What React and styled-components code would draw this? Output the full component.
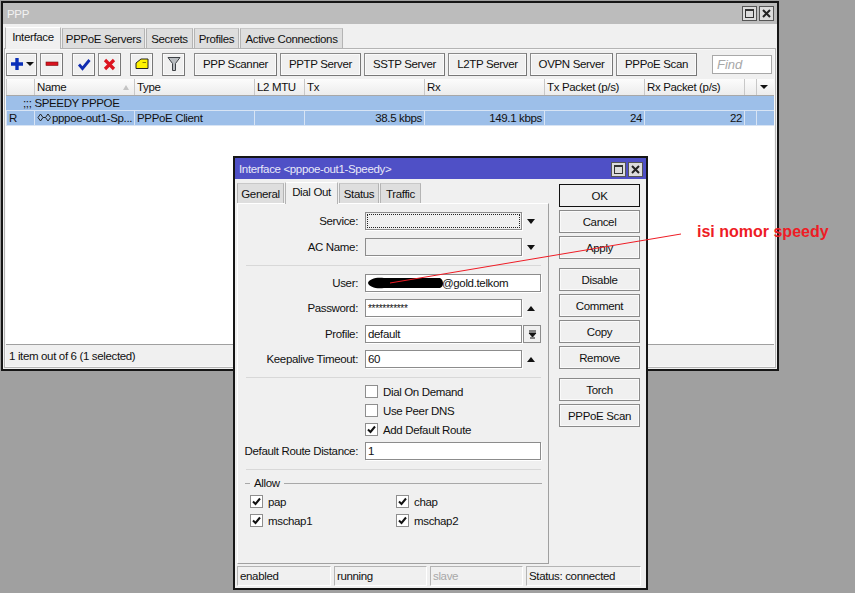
import styled, { createGlobalStyle } from 'styled-components';

const Global = createGlobalStyle`
  html, body { margin: 0; padding: 0; background: #a0a0a0; }
  * { box-sizing: border-box; }
  #root { font-family: "Liberation Sans", Arial, sans-serif; font-size: 11.5px; letter-spacing: -0.35px; color: #111; }
`;

const Desktop = styled.div`
  position: relative;
  width: 855px;
  height: 593px;
  overflow: hidden;
  background: #a0a0a0;
`;

const Window = styled.div`
  position: absolute;
  left: ${(p) => p.$x}px;
  top: ${(p) => p.$y}px;
  width: ${(p) => p.$w}px;
  height: ${(p) => p.$h}px;
  display: flex;
  flex-direction: column;
  background: #f0f0f0;
  border: 2px solid #161616;
`;

const TitleBar = styled.div`
  flex: none;
  height: 21px;
  display: flex;
  align-items: center;
  justify-content: space-between;
  padding: ${(p) => (p.$active ? '1px 3px 0 4px' : '0 3px 0 4px')};
  color: ${(p) => (p.$active ? '#e8e8f8' : '#f2f2f2')};
  background: ${(p) => (p.$active ? '#4f50c6' : '#bcbcbc')};
`;

const TitleButtons = styled.div`
  display: flex;
  gap: 2px;
`;

const TitleButton = styled.div`
  width: 15px;
  height: 15px;
  display: flex;
  align-items: center;
  justify-content: center;
  background: #dcdcdc;
  border: 1px solid #555;
`;

const TabStrip = styled.div`
  flex: none;
  height: ${(p) => p.$h}px;
  display: flex;
  align-items: flex-end;
  padding-left: ${(p) => p.$pad}px;
  gap: 1px;
`;

const Tab = styled.div`
  height: ${(p) => (p.$active ? 22 : 20)}px;
  width: ${(p) => p.$w}px;
  display: flex;
  align-items: center;
  justify-content: center;
  padding-bottom: ${(p) => (p.$active ? 3 : 0)}px;
  white-space: nowrap;
  background: ${(p) => (p.$active ? '#f0f0f0' : '#dedede')};
  border: 1px solid #b4b4b4;
  border-bottom: none;
  border-top-color: ${(p) => (p.$active ? '#fff' : '#c8c8c8')};
  margin-bottom: ${(p) => (p.$active ? -1 : 0)}px;
  position: relative;
`;

const MainBody = styled.div`
  flex: 1;
  margin: 0 1px 1px 1px;
  border: 1px solid #b4b4b4;
  box-shadow: inset 0 0 0 1px #f8f8f8;
  display: flex;
  flex-direction: column;
  min-height: 0;
  padding: 0 1px;
`;

const Toolbar = styled.div`
  flex: none;
  height: 30px;
  display: flex;
  align-items: center;
  padding: 3px 1px 3px 0;
`;

const ToolButton = styled.button`
  height: 23px;
  width: ${(p) => p.$w}px;
  margin-left: ${(p) => p.$gap}px;
  padding: 0;
  display: flex;
  align-items: center;
  justify-content: center;
  gap: 1px;
  font: inherit;
  letter-spacing: inherit;
  color: #111;
  background: #f0f0f0;
  border: 1px solid #8a8a8a;
  border-right-color: #777;
  border-bottom-color: #777;
  box-shadow: inset 0 0 0 1px #fafafa;
`;

const FindBox = styled.div`
  width: 60px;
  height: 19px;
  margin-left: 15px;
  padding: 1px 4px;
  font-size: 13px;
  letter-spacing: 0;
  font-style: italic;
  color: #a8a8a8;
  background: #fff;
  border: 1px solid #a8a8a8;
`;

const TableWrap = styled.div`
  flex: 1;
  min-height: 0;
  display: flex;
  flex-direction: column;
  background: #fff;
  border-bottom: 1px solid #a0a0a0;
`;

const columns = '28px 100px 120px 50px 120px 120px 100px 100px 12px 17px';

const HeadRow = styled.div`
  flex: none;
  display: grid;
  grid-template-columns: ${columns};
  height: 17px;
  background: linear-gradient(#fcfcfc, #ececec);
  border-bottom: 1px solid #a8a8a8;
`;

const HeadCell = styled.div`
  position: relative;
  display: flex;
  align-items: center;
  padding-left: 2px;
  border-left: 1px solid #c8c8c8;
  white-space: nowrap;
`;

const SortMark = styled.span`
  position: absolute;
  right: 5px;
  top: 6px;
  width: 0;
  height: 0;
  border-left: 3px solid transparent;
  border-right: 3px solid transparent;
  border-bottom: 5px solid #c4c4c4;
`;

const MenuArrow = styled.span`
  width: 0;
  height: 0;
  margin-left: 1px;
  border-left: 4px solid transparent;
  border-right: 4px solid transparent;
  border-top: 4px solid #111;
`;

const GroupRow = styled.div`
  flex: none;
  height: 15px;
  padding-left: 17px;
  line-height: 14px;
  background: #9dbfe9;
  border-bottom: 1px solid #d8e4f4;
`;

const DataRow = styled.div`
  flex: none;
  display: grid;
  grid-template-columns: ${columns};
  height: 15px;
  background: #9dbfe9;
  border-bottom: 1px solid #d8e4f4;
`;

const DataCell = styled.div`
  display: flex;
  align-items: center;
  justify-content: ${(p) => (p.$right ? 'flex-end' : 'flex-start')};
  padding: 0 2px 1px 2px;
  border-left: 1px solid #d8e4f4;
  white-space: nowrap;
  overflow: hidden;
`;

const LinkIcon = styled.svg`
  flex: none;
`;

const StatusLine = styled.div`
  flex: none;
  height: 22px;
  display: flex;
  align-items: center;
  padding-left: 3px;
`;

const DialogBody = styled.div`
  flex: 1;
  min-height: 0;
  display: flex;
  padding: 0 0 0 2px;
`;

const DialogLeft = styled.div`
  width: 315px;
  display: flex;
  flex-direction: column;
`;

const FormPanel = styled.div`
  flex: 1;
  width: 312px;
  padding: 8px 0 0 0;
  border-top: 1px solid #fff;
  border-right: 1px solid #a0a0a0;
  border-bottom: 1px solid #a0a0a0;
  border-left: 1px solid #fff;
`;

const Row = styled.div`
  display: grid;
  grid-template-columns: 120px 7px 157px 19px;
  align-items: center;
  height: 18px;
  margin-top: ${(p) => p.$top || 0}px;
`;

const Label = styled.div`
  text-align: right;
  white-space: nowrap;
`;

const Input = styled.div`
  grid-column: ${(p) => (p.$wide ? '3 / 5' : '3')};
  height: 18px;
  padding: 0 2px;
  line-height: 16px;
  white-space: nowrap;
  background: ${(p) => (p.$off ? '#f0f0f0' : '#fff')};
  border: 1px solid #8c8c8c;
  box-shadow: 1px 1px 0 #fff;
`;

const FocusDots = styled.div`
  margin: 1px -1px;
  height: 14px;
  border: 1px dotted #222;
`;

const UserText = styled.span`
  margin-left: 74px;
`;

const Stars = styled.span`
  font-size: 10px;
  letter-spacing: -0.3px;
`;

const SideArrow = styled.div`
  justify-self: start;
  width: 0;
  height: 0;
  margin-left: 5px;
  border-left: 4.5px solid transparent;
  border-right: 4.5px solid transparent;
  ${(p) => (p.$up ? 'border-bottom: 5px solid #111;' : 'border-top: 5px solid #111;')}
`;

const MiniButton = styled.div`
  justify-self: end;
  width: 18px;
  height: 18px;
  display: flex;
  align-items: center;
  justify-content: center;
  background: #f0f0f0;
  border: 1px solid #8c8c8c;
`;

const Divider = styled.div`
  height: 1px;
  margin: ${(p) => p.$top}px 8px 0 8px;
  width: 295px;
  background: #d8d8d8;
`;

const CheckRow = styled.label`
  display: flex;
  align-items: center;
  gap: 5px;
  height: 13px;
  margin: ${(p) => p.$top}px 0 0 ${(p) => p.$left || 0}px;
  white-space: nowrap;
`;

const Box = styled.span`
  flex: none;
  width: 13px;
  height: 13px;
  display: flex;
  align-items: center;
  justify-content: center;
  background: #fff;
  border: 1px solid #8e8e8e;
`;

const AllowHead = styled.div`
  display: flex;
  align-items: center;
  gap: 4px;
  height: 14px;
  margin: 6px 0 0 7px;
  width: 297px;
  &::before {
    content: '';
    width: 5px;
    height: 1px;
    background: #a8a8a8;
  }
  &::after {
    content: '';
    flex: 1;
    height: 1px;
    background: #a8a8a8;
  }
`;

const AllowGrid = styled.div`
  display: grid;
  grid-template-columns: 146px 146px;
  row-gap: 6px;
  margin: 5px 0 0 12px;
`;

const DialogRight = styled.div`
  flex: 1;
  display: flex;
  flex-direction: column;
  padding: 5px 0 0 7px;
`;

const SideButton = styled.button`
  flex: none;
  width: 81px;
  height: 23px;
  margin-top: ${(p) => p.$top || 0}px;
  padding: 0;
  font: inherit;
  letter-spacing: inherit;
  color: #111;
  background: #f0f0f0;
  border: ${(p) => (p.$primary ? '1px solid #111' : '1px solid #8a8a8a')};
  box-shadow: ${(p) => (p.$primary ? 'none' : 'inset 0 0 0 1px #fafafa')};
`;

const StatusBar = styled.div`
  flex: none;
  height: 24px;
  display: grid;
  grid-template-columns: 94px 93px 93px 115px;
  column-gap: 3px;
  align-items: center;
  margin: 0 2px;
`;

const StatusCell = styled.div`
  height: 20px;
  padding: 1px 2px;
  line-height: 16px;
  color: ${(p) => (p.$dim ? '#a8a8a8' : '#111')};
  border: 1px solid #b4b4b4;
  border-right-color: #fff;
  border-bottom-color: #fff;
`;

const Overlay = styled.svg`
  position: absolute;
  left: 0;
  top: 0;
  pointer-events: none;
`;

const Note = styled.div`
  position: absolute;
  left: 697px;
  top: 223px;
  font-size: 16px;
  letter-spacing: 0;
  font-weight: bold;
  color: #ee1c25;
  white-space: nowrap;
`;

const Check = () => (
  <svg width="9" height="9" viewBox="0 0 9 9">
    <path d="M1 4.5 L3.5 7 L8 1.5" fill="none" stroke="#111" strokeWidth="2" />
  </svg>
);

const CheckItem = ({ on, top, left, children }) => (
  <CheckRow $top={top} $left={left}>
    <Box>{on && <Check />}</Box>
    {children}
  </CheckRow>
);

const WindowControls = () => (
  <TitleButtons>
    <TitleButton>
      <svg width="11" height="11" viewBox="0 0 11 11">
        <path d="M1 1.5 H10 M1.5 1 V10 M9.5 1 V10 M1 9.5 H10" stroke="#333" strokeWidth="1" fill="none" />
        <path d="M1 2.5 H10" stroke="#333" strokeWidth="1" />
      </svg>
    </TitleButton>
    <TitleButton>
      <svg width="9" height="9" viewBox="0 0 9 9">
        <path d="M1 1 L8 8 M8 1 L1 8" stroke="#222" strokeWidth="2" />
      </svg>
    </TitleButton>
  </TitleButtons>
);

const mainTabs = [
  ['Interface', 56, true],
  ['PPPoE Servers', 83],
  ['Secrets', 47],
  ['Profiles', 45],
  ['Active Connections', 103],
];

const textTools = [
  ['PPP Scanner', 83, 9],
  ['PPTP Server', 81, 3],
  ['SSTP Server', 81, 3],
  ['L2TP Server', 79, 3],
  ['OVPN Server', 83, 3],
  ['PPPoE Scan', 81, 3],
];

const headers = ['', 'Name', 'Type', 'L2 MTU', 'Tx', 'Rx', 'Tx Packet (p/s)', 'Rx Packet (p/s)', ''];

const dialogTabs = [
  ['General', 47],
  ['Dial Out', 53, true],
  ['Status', 40],
  ['Traffic', 41],
];

const sideButtons = [
  ['OK', 0, true],
  ['Cancel', 3],
  ['Apply', 3],
  ['Disable', 9],
  ['Comment', 3],
  ['Copy', 3],
  ['Remove', 3],
  ['Torch', 9],
  ['PPPoE Scan', 3],
];

export default function App() {
  return (
    <Desktop>
      <Global />

      <Window $x={1} $y={1} $w={778} $h={370}>
        <TitleBar>
          <span>PPP</span>
          <WindowControls />
        </TitleBar>
        <TabStrip $h={24} $pad={2}>
          {mainTabs.map(([label, w, active]) => (
            <Tab key={label} $w={w} $active={active}>{label}</Tab>
          ))}
        </TabStrip>
        <MainBody>
          <Toolbar>
            <ToolButton $w={31} $gap={0}>
              <svg width="14" height="14" viewBox="0 0 14 14">
                <path d="M7 1 V13 M1 7 H13" stroke="#0a2fb8" strokeWidth="3.4" />
              </svg>
              <MenuArrow />
            </ToolButton>
            <ToolButton $w={23} $gap={3}>
              <svg width="14" height="6" viewBox="0 0 14 6">
                <rect x="1" y="1" width="12" height="3.5" fill="#d8121e" stroke="#7c1010" strokeWidth="0.6" />
              </svg>
            </ToolButton>
            <ToolButton $w={23} $gap={9}>
              <svg width="14" height="13" viewBox="0 0 14 13">
                <path d="M2 6.5 L5.5 10.5 L12.5 2" fill="none" stroke="#0f2bb0" strokeWidth="2.8" />
              </svg>
            </ToolButton>
            <ToolButton $w={23} $gap={3}>
              <svg width="13" height="13" viewBox="0 0 13 13">
                <path d="M2 2 L11 11 M11 2 L2 11" stroke="#dc1420" strokeWidth="3.2" />
              </svg>
            </ToolButton>
            <ToolButton $w={23} $gap={9}>
              <svg width="14" height="12" viewBox="0 0 14 12">
                <path d="M1 5 L6 1 H13 V10.5 H1 Z" fill="#fff200" stroke="#222" strokeWidth="1" />
                <path d="M7.5 4.5 H11" stroke="#8c8400" strokeWidth="1" />
              </svg>
            </ToolButton>
            <ToolButton $w={23} $gap={9}>
              <svg width="14" height="16" viewBox="0 0 14 16">
                <path d="M1 1.5 H13 L8.5 7.5 V14.5 H5.5 V7.5 Z" fill="#b8bcc0" stroke="#3c4044" strokeWidth="1" />
              </svg>
            </ToolButton>
            {textTools.map(([label, w, gap]) => (
              <ToolButton key={label} $w={w} $gap={gap}>{label}</ToolButton>
            ))}
            <FindBox>Find</FindBox>
          </Toolbar>
          <TableWrap>
            <HeadRow>
              {headers.map((h, i) => (
                <HeadCell key={i}>
                  {h}
                  {h === 'Name' && <SortMark />}
                </HeadCell>
              ))}
              <HeadCell><MenuArrow /></HeadCell>
            </HeadRow>
            <GroupRow>;;; SPEEDY PPPOE</GroupRow>
            <DataRow>
              <DataCell>R</DataCell>
              <DataCell>
                <LinkIcon width="15" height="9" viewBox="0 0 15 9">
                  <path d="M3.5 1 L6 4.5 L3.5 8 L1 4.5 Z M11 1 L13.5 4.5 L11 8 L8.5 4.5 Z" fill="none" stroke="#222" />
                  <path d="M6 4.5 H8.5" stroke="#222" />
                </LinkIcon>
                pppoe-out1-Sp...
              </DataCell>
              <DataCell>PPPoE Client</DataCell>
              <DataCell />
              <DataCell $right>38.5 kbps</DataCell>
              <DataCell $right>149.1 kbps</DataCell>
              <DataCell $right>24</DataCell>
              <DataCell $right>22</DataCell>
              <DataCell />
              <DataCell />
            </DataRow>
          </TableWrap>
          <StatusLine>1 item out of 6 (1 selected)</StatusLine>
        </MainBody>
      </Window>

      <Window $x={233} $y={156} $w={415} $h={434}>
        <TitleBar $active>
          <span>Interface &lt;pppoe-out1-Speedy&gt;</span>
          <WindowControls />
        </TitleBar>
        <DialogBody>
          <DialogLeft>
            <TabStrip $h={24} $pad={0}>
              {dialogTabs.map(([label, w, active]) => (
                <Tab key={label} $w={w} $active={active}>{label}</Tab>
              ))}
            </TabStrip>
            <FormPanel>
              <Row>
                <Label>Service:</Label><span />
                <Input $off><FocusDots /></Input>
                <SideArrow />
              </Row>
              <Row $top={8}>
                <Label>AC Name:</Label><span />
                <Input $off />
                <SideArrow />
              </Row>
              <Divider $top={9} />
              <Row $top={8}>
                <Label>User:</Label><span />
                <Input $wide><UserText>@gold.telkom</UserText></Input>
              </Row>
              <Row $top={7}>
                <Label>Password:</Label><span />
                <Input><Stars>***********</Stars></Input>
                <SideArrow $up />
              </Row>
              <Row $top={8}>
                <Label>Profile:</Label><span />
                <Input>default</Input>
                <MiniButton>
                  <svg width="9" height="9" viewBox="0 0 9 9">
                    <path d="M1 1 H8 M1 3 H8 L4.5 7 Z M2 8 H7" stroke="#111" fill="#111" />
                  </svg>
                </MiniButton>
              </Row>
              <Row $top={7}>
                <Label>Keepalive Timeout:</Label><span />
                <Input>60</Input>
                <SideArrow $up />
              </Row>
              <Divider $top={9} />
              <CheckItem top={7} left={127}>Dial On Demand</CheckItem>
              <CheckItem top={6} left={127}>Use Peer DNS</CheckItem>
              <CheckItem on top={6} left={127}>Add Default Route</CheckItem>
              <Row $top={6}>
                <Label>Default Route Distance:</Label><span />
                <Input $wide>1</Input>
              </Row>
              <Divider $top={9} />
              <AllowHead>Allow</AllowHead>
              <AllowGrid>
                <CheckItem on top={0}>pap</CheckItem>
                <CheckItem on top={0}>chap</CheckItem>
                <CheckItem on top={0}>mschap1</CheckItem>
                <CheckItem on top={0}>mschap2</CheckItem>
              </AllowGrid>
            </FormPanel>
          </DialogLeft>
          <DialogRight>
            {sideButtons.map(([label, top, primary]) => (
              <SideButton key={label} $top={top} $primary={primary}>{label}</SideButton>
            ))}
          </DialogRight>
        </DialogBody>
        <StatusBar>
          <StatusCell>enabled</StatusCell>
          <StatusCell>running</StatusCell>
          <StatusCell $dim>slave</StatusCell>
          <StatusCell>Status: connected</StatusCell>
        </StatusBar>
      </Window>

      <Overlay width="855" height="593" viewBox="0 0 855 593">
        <path d="M368 283 C369 279 376 277 384 278 L440 278 C444 280 444 287 440 288 L384 288 C376 289 369 287 368 283 Z" fill="#000" />
        <path d="M390 283 L681 234" stroke="#ee1c25" strokeWidth="1" fill="none" />
      </Overlay>
      <Note>isi nomor speedy</Note>
    </Desktop>
  );
}
